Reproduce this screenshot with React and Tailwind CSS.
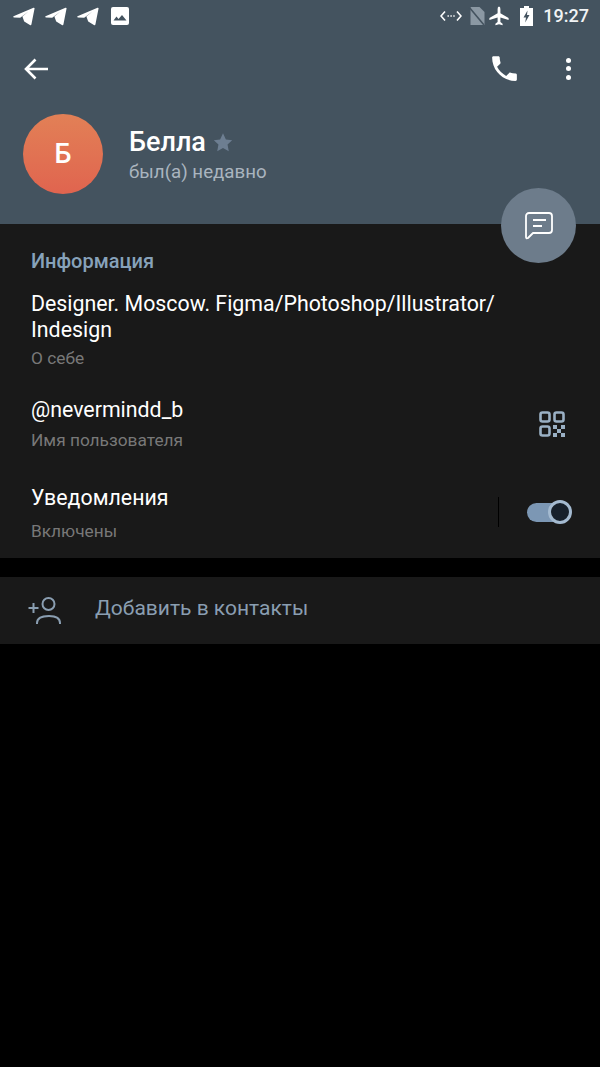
import React from 'react';

const font = { fontFamily: 'Roboto, sans-serif' };

const PlaneIcon = () => (
  <svg width="22" height="19" viewBox="0 0 22 19" fill="#fff">
    <path d="M0.500 9.200 L20.500 0.800 Q21.800 0.500 21.500 1.800 L18.400 17.400 Q18 18.600 16.900 18 L11.200 14.400 L9.400 9.400 L15.400 4.600 L7.200 10.800 L1 10.400 Q-0.200 9.900 0.500 9.200 Z" />
  </svg>
);

const StatusBar = () => (
  <div className="flex h-[33px] items-center justify-between pl-[13px] pr-[11px] pb-[1px]">
    <div className="flex items-center gap-[10px]">
      <PlaneIcon />
      <PlaneIcon />
      <PlaneIcon />
      <svg className="ml-[2px]" width="18" height="18" viewBox="0 0 18 18">
        <rect width="18" height="18" rx="2" fill="#fff" />
        <path d="M2.500 13.500 L5.500 9.500 L7.500 12 L11 8 L15.500 13.500 Z" fill="#44535f" />
      </svg>
    </div>
    <div className="flex items-center">
      <svg width="22" height="14" viewBox="0 0 22 14" fill="none" stroke="#fff" strokeWidth="1.600">
        <path d="M5 2.500 L1 7 L5 11.500 M17 2.500 L21 7 L17 11.500" />
        <path d="M7.500 7h1.400M10.400 7h1.400M13.300 7h1.400" />
      </svg>
      <svg className="ml-[6px]" width="17" height="20" viewBox="0 0 16 20">
        <path d="M2 1h9l5 5v13H2z" fill="#8b98a3" />
        <path d="M0.500 1 L15.500 19" stroke="#44535f" strokeWidth="1.600" />
      </svg>
      <svg className="ml-[4px]" width="20" height="20" viewBox="0 0 20 20" fill="#fff">
        <path d="M10 0.500 Q11.400 0.500 11.400 3 V7.200 L19.600 12 V14 L11.400 11.600 V16 L13.600 17.700 V19.200 L10 18.200 L6.400 19.200 V17.700 L8.600 16 V11.600 L0.400 14 V12 L8.600 7.200 V3 Q8.600 0.500 10 0.500 Z" />
      </svg>
      <svg className="ml-[11px]" width="13" height="20" viewBox="0 0 13 20">
        <path d="M4 0h5v2h4v18H0V2h4z" fill="#fff" />
        <path d="M7.500 4.500 L3.500 11.500 H6 L5.200 16.500 L9.500 9 H7 Z" fill="#44535f" />
      </svg>
      <span className="ml-[10px] text-[18px] font-medium leading-none text-[#f1f3f5]">19:27</span>
    </div>
  </div>
);

const Toolbar = () => (
  <div className="flex h-[72px] items-center justify-between pl-[24px] pr-[29px] pb-[1px]">
    <svg width="25" height="22" viewBox="0 0 25 22" fill="none" stroke="#fff" strokeWidth="2.600">
      <path d="M24 11H2M11.500 1.500 L2 11 L11.500 20.500" />
    </svg>
    <div className="flex items-center gap-[45px]">
      <svg width="33" height="33" viewBox="0 0 24 24" fill="#fff">
        <path d="M6.600 10.800c1.400 2.800 3.800 5.100 6.600 6.600l2.200-2.200c.3-.3.700-.4 1-.2 1.100.4 2.300.6 3.600.6.600 0 1 .4 1 1V20c0 .6-.4 1-1 1C10.600 21 3 13.400 3 4c0-.6.4-1 1-1h3.500c.6 0 1 .4 1 1 0 1.300.2 2.500.6 3.600.1.300 0 .7-.2 1z" />
      </svg>
      <div className="flex flex-col gap-[3.500px]">
        <div className="h-[5px] w-[5px] rounded-full bg-white" />
        <div className="h-[5px] w-[5px] rounded-full bg-white" />
        <div className="h-[5px] w-[5px] rounded-full bg-white" />
      </div>
    </div>
  </div>
);

const Profile = () => (
  <div className="flex items-start pl-[23px] pt-[9px]">
    <div className="flex h-[80px] w-[80px] items-center justify-center rounded-full bg-gradient-to-b from-[#e28056] to-[#e0644f] text-[27px] font-medium text-white">
      Б
    </div>
    <div className="ml-[26px] pt-[10px]">
      <div className="flex items-center">
        <span className="text-[27px] font-medium leading-[36px] text-white">Белла</span>
        <svg className="ml-[6px]" width="22" height="21" viewBox="0 0 24 24" fill="#6d7e91">
          <path d="M12 1.500l3.300 7 7.200.9-5.300 5 1.400 7.600L12 18.300 5.400 22l1.400-7.600-5.300-5 7.200-.9z" />
        </svg>
      </div>
      <div className="text-[18.700px] leading-[24px] text-[#aab5bf]">был(а) недавно</div>
    </div>
  </div>
);

const QrIcon = () => (
  <svg className="mb-[2px]" width="26" height="26" viewBox="0 0 26 26" fill="none" stroke="#9ab0c4" strokeWidth="2.600">
    <rect x="1.500" y="1.500" width="9" height="9" rx="2" />
    <rect x="15.500" y="1.500" width="9" height="9" rx="2" />
    <rect x="1.500" y="15.500" width="9" height="9" rx="2" />
    <g fill="#9ab0c4" stroke="none">
      <rect x="14" y="14" width="4" height="4" />
      <rect x="22" y="14" width="4" height="4" />
      <rect x="18" y="18" width="4" height="4" />
      <rect x="14" y="22" width="4" height="4" />
      <rect x="22" y="22" width="4" height="4" />
    </g>
  </svg>
);

const InfoSection = () => (
  <div className="h-[334px] bg-[#191919] pl-[31px]">
    <div className="pt-[25px] text-[20px] font-medium leading-[24px] text-[#87a2ba]">Информация</div>
    <div className="mt-[18px] text-[21.350px] leading-[26px] text-white">
      Designer. Moscow. Figma/Photoshop/Illustrator/
      <br />
      Indesign
    </div>
    <div className="mt-[3px] text-[17.300px] leading-[24px] text-[#787878]">О себе</div>

    <div className="mt-[27px] flex items-center justify-between pr-[35px]">
      <div>
        <div className="text-[21.350px] leading-[26px] text-white">@nevermindd_b</div>
        <div className="mt-[5px] text-[17.300px] leading-[24px] text-[#787878]">Имя пользователя</div>
      </div>
      <QrIcon />
    </div>

    <div className="mt-[33px] flex items-center justify-between pr-[28px]">
      <div>
        <div className="text-[21.350px] leading-[26px] text-white">Уведомления</div>
        <div className="mt-[8px] text-[17.300px] leading-[24px] text-[#787878]">Включены</div>
      </div>
      <div className="mb-[4px] flex items-center">
        <div className="h-[30px] w-px bg-black" />
        <div className="relative ml-[28px] h-[24px] w-[45px]">
          <div className="absolute left-0 top-[3px] h-[19px] w-[36px] rounded-full bg-[#7c97b4]" />
          <div className="absolute right-0 top-0 h-[24px] w-[24px] rounded-full border-[3px] border-[#a4bad0] bg-[#17202b]" />
        </div>
      </div>
    </div>
  </div>
);

const AddContact = () => (
  <div className="mt-[19px] flex h-[67px] items-center bg-[#191919] pl-[28px]">
    <svg width="33" height="28" viewBox="0 0 33 28" fill="none" stroke="#8a9eb1" strokeWidth="2">
      <circle cx="20.500" cy="7" r="6" />
      <path d="M9 27v-1c0-4 4-7 12-7s11 3 11 7v1" />
      <path d="M0.500 11h10M5.500 6v10" />
    </svg>
    <span className="ml-[34px] pb-[3px] text-[21px] text-[#8a9eb1]">Добавить в контакты</span>
  </div>
);

export default function App() {
  return (
    <div className="relative min-h-[1067px] w-[600px] bg-black" style={font}>
      <div className="h-[224px] bg-[#44535f]">
        <StatusBar />
        <Toolbar />
        <Profile />
      </div>

      {/* compose button sits across the header edge */}
      <div className="absolute left-[501px] top-[188px] flex h-[75px] w-[75px] items-center justify-center rounded-full bg-[#6d7c8b]">
        <svg width="30" height="30" viewBox="0 0 30 30" fill="none" stroke="#fff" strokeWidth="1.800" strokeLinejoin="round">
          <path d="M5 2h20a3 3 0 0 1 3 3v14a3 3 0 0 1-3 3H9l-5 5q-2 1-2-1V5a3 3 0 0 1 3-3z" />
          <path d="M9 9h13M9 15h9" />
        </svg>
      </div>

      <InfoSection />
      <AddContact />
    </div>
  );
}
